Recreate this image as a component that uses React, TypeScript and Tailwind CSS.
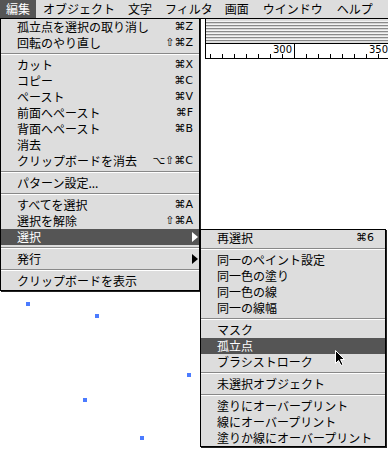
import React from 'react';

type Row = { label: string; keys?: string; sub?: boolean; on?: boolean } | null;

const editMenu: Row[] = [
  { label: '孤立点を選択の取り消し', keys: '⌘Z' },
  { label: '回転のやり直し', keys: '⇧⌘Z' },
  null,
  { label: 'カット', keys: '⌘X' },
  { label: 'コピー', keys: '⌘C' },
  { label: 'ペースト', keys: '⌘V' },
  { label: '前面へペースト', keys: '⌘F' },
  { label: '背面へペースト', keys: '⌘B' },
  { label: '消去' },
  { label: 'クリップボードを消去', keys: '⌥⇧⌘C' },
  null,
  { label: 'パターン設定...' },
  null,
  { label: 'すべてを選択', keys: '⌘A' },
  { label: '選択を解除', keys: '⇧⌘A' },
  { label: '選択', sub: true, on: true },
  null,
  { label: '発行', sub: true },
  null,
  { label: 'クリップボードを表示' },
];

const selectMenu: Row[] = [
  { label: '再選択', keys: '⌘6' },
  null,
  { label: '同一のペイント設定' },
  { label: '同一色の塗り' },
  { label: '同一色の線' },
  { label: '同一の線幅' },
  null,
  { label: 'マスク' },
  { label: '孤立点', on: true },
  { label: 'ブラシストローク' },
  null,
  { label: '未選択オブジェクト' },
  null,
  { label: '塗りにオーバープリント' },
  { label: '線にオーバープリント' },
  { label: '塗りか線にオーバープリント' },
];

const Arrow = ({ white }: { white?: boolean }) => (
  <svg width="6" height="10" viewBox="0 0 6 10">
    <polygon points="0,0 6,5 0,10" fill={white ? '#ffffff' : '#000000'} />
  </svg>
);

const MenuRow = ({ row, keyPad }: { row: Row; keyPad: string }) => {
  if (row === null) {
    return (
      <div className="h-[6px] pt-[2px]">
        <div className="h-px bg-[#888888]" />
        <div className="h-px bg-white" />
      </div>
    );
  }
  return (
    <div
      className={`flex h-[16px] items-center justify-between pl-[16px] ${
        row.on ? 'bg-[#555555] text-white' : 'text-black'
      } ${row.sub ? 'pr-[1px]' : keyPad}`}
    >
      <span className="leading-[16px] whitespace-nowrap">{row.label}</span>
      {row.keys && (
        <span className="font-['DejaVu_Sans',sans-serif] text-[11px] leading-[16px]">{row.keys}</span>
      )}
      {row.sub && <Arrow white={row.on} />}
    </div>
  );
};

const minorTicks = Array.from({ length: 16 }, (_, i) => 4 + i * 12).filter((x) => x !== 88);

export default function App() {
  return (
    <div className="relative h-[450px] w-[388px] overflow-hidden bg-white font-['Noto_Sans_CJK_JP','DejaVu_Sans',sans-serif] text-[12px] text-black">
      {/* menu bar */}
      <div className="flex h-[19px] items-stretch border-b border-black bg-[#dddddd] leading-[18px]">
        <span className="bg-[#555555] px-[6px] text-white">編集</span>
        <span className="ml-[7px]">オブジェクト</span>
        <span className="ml-[13px]">文字</span>
        <span className="ml-[13px]">フィルタ</span>
        <span className="ml-[12px]">画面</span>
        <span className="ml-[14px]">ウインドウ</span>
        <span className="ml-[14px]">ヘルプ</span>
      </div>

      {/* document window: title stripes + ruler */}
      <div className="ml-[205px] border-l border-black bg-[#dddddd] pt-[2px]">
        <div className="h-[20px] bg-[repeating-linear-gradient(to_bottom,#f4f4f4_0px,#f4f4f4_1px,#8a8a8a_1px,#8a8a8a_2px,#d6d6d6_2px,#d6d6d6_3px)]" />
        <div className="h-[2px]" />
        <div className="h-[16px] border-y border-black bg-white">
          <svg width="182" height="14" viewBox="0 0 182 14" className="block">
            <line x1="88.5" y1="0" x2="88.5" y2="14" stroke="#000" />
            {minorTicks.map((x) => (
              <line key={x} x1={x + 0.5} y1="10" x2={x + 0.5} y2="14" stroke="#000" />
            ))}
            <text x="86" y="8.5" fontSize="10" textAnchor="end" fontFamily="DejaVu Sans, sans-serif">
              300
            </text>
            <text x="182" y="8.5" fontSize="10" textAnchor="end" fontFamily="DejaVu Sans, sans-serif">
              350
            </text>
          </svg>
        </div>
      </div>

      {/* selected anchor points on the canvas */}
      <div className="absolute left-[26px] top-[302px] h-[4px] w-[4px] bg-[#4b7bff]" />
      <div className="absolute left-[95px] top-[314px] h-[4px] w-[4px] bg-[#4b7bff]" />
      <div className="absolute left-[187px] top-[373px] h-[4px] w-[4px] bg-[#4b7bff]" />
      <div className="absolute left-[83px] top-[398px] h-[4px] w-[4px] bg-[#4b7bff]" />
      <div className="absolute left-[140px] top-[436px] h-[4px] w-[4px] bg-[#4b7bff]" />

      {/* 編集 menu */}
      <div className="absolute left-0 top-[18px] w-[200px] border border-black bg-[#dddddd] pb-[1px] shadow-[1px_1px_0_#222222]">
        {editMenu.map((row, i) => (
          <MenuRow key={i} row={row} keyPad="pr-[6px]" />
        ))}
      </div>

      {/* 選択 submenu */}
      <div className="absolute left-[200px] top-[229px] w-[186px] border border-black bg-[#dddddd] shadow-[1px_1px_0_#222222]">
        {selectMenu.map((row, i) => (
          <MenuRow key={i} row={row} keyPad="pr-[11px]" />
        ))}
      </div>

      {/* mouse pointer */}
      <svg className="absolute left-[334px] top-[349px]" width="12" height="18" viewBox="0 0 12 18">
        <path d="M1.5 1.5 L1.5 14.5 L4.5 11.5 L7 16.5 L9 15.5 L6.5 10.5 L10.5 10.5 Z" fill="#000" stroke="#fff" strokeWidth="1" />
      </svg>
    </div>
  );
}
